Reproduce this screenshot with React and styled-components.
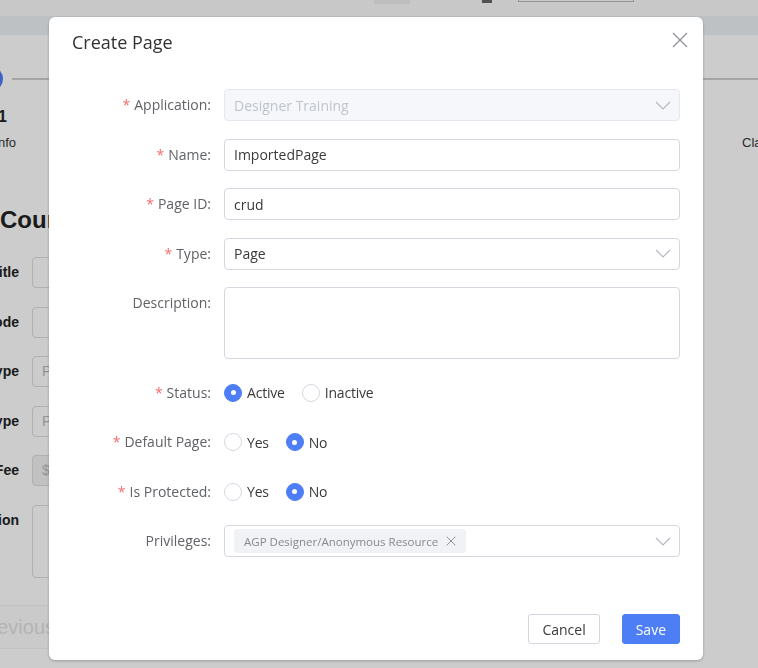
import styled, { createGlobalStyle } from "styled-components";

const GlobalStyle = createGlobalStyle`
  html, body {
    margin: 0;
    padding: 0;
    background: #fff;
    font-family: "Open Sans", "Noto Sans", sans-serif;
  }
`

// ---- page behind the dialog ----

const Page = styled.div`
  width: 758px;
  height: 668px;
  overflow: hidden;
  background: #fff;
  font-family: "Liberation Sans", Arial, sans-serif;
  color: #222;
`

const TopBar = styled.div`
  height: 16px;
  background: #fbfbfb;
  display: flex;
  align-items: flex-start;
  padding-left: 374px;
`

const TopTab = styled.div`
  width: 36px;
  height: 4px;
  background: #eeeeee;
`

const TopCheck = styled.div`
  width: 10px;
  height: 3px;
  margin-left: 72px;
  background: #666;
`

const TopInput = styled.div`
  width: 114px;
  height: 1px;
  margin-left: 26px;
  border: 1px solid #bbb;
  border-top: none;
`

const SubBar = styled.div`
  height: 19px;
  background: #eef2f6;
`

const BgBody = styled.div`
  margin-left: -41px;
  padding-top: 31px;
`

const StepHead = styled.div`
  display: flex;
  align-items: center;
  height: 26px;
`

const StepDot = styled.div`
  width: 26px;
  height: 26px;
  margin-left: 18px;
  border-radius: 50%;
  background: #4d7ef5;
`

const StepLine = styled.div`
  flex: 1;
  height: 2px;
  margin-left: 9px;
  background: #cfcfcf;
`

const StepTexts = styled.div`
  display: flex;
  align-items: flex-start;
  margin-top: 15px;
`

const StepText = styled.div`
  flex-shrink: 0;
  width: ${p => p.$w}px;
  margin-left: ${p => p.$offset || 0}px;
  white-space: nowrap;
`

const StepNum = styled.div`
  font-weight: 700;
  font-size: 16px;
  line-height: 20px;
`

const StepName = styled.div`
  font-size: 13px;
  line-height: 20px;
  margin-top: 6px;
  color: #333;
`

const BgHeading = styled.h1`
  margin: 51px 0 0 41px;
  font-size: 24px;
  line-height: 32px;
  font-weight: 700;
  white-space: nowrap;
`

const BgForm = styled.div`
  margin-top: 21px;
  display: flex;
  flex-direction: column;
  gap: 18.5px;
`

const BgRow = styled.div`
  display: flex;
  align-items: flex-start;
  gap: 13px;
`

const BgLabel = styled.div`
  width: 60px;
  text-align: right;
  white-space: nowrap;
  font-weight: 700;
  font-size: 14px;
  line-height: 31px;
  direction: rtl;
`

const BgInput = styled.div`
  width: 220px;
  height: ${p => p.$h || 31}px;
  box-sizing: border-box;
  border: 1px solid #dcdcdc;
  border-radius: 4px;
  background: ${p => (p.$muted ? "#f2f2f2" : "#fff")};
  padding-left: 9px;
  font-size: 14px;
  line-height: 29px;
  color: #b8b8b8;
`

const BgButton = styled.div`
  margin-top: 27px;
  margin-left: -10px;
  width: 160px;
  height: 44px;
  box-sizing: border-box;
  border-top: 1px solid #f4f4f4;
  border-bottom: 1px solid #f4f4f4;
  background: #fdfdfd;
  font-size: 20px;
  line-height: 42px;
  color: #e2e2e2;
  text-align: right;
  padding-right: 54px;
`

// ---- dialog ----

const Overlay = styled.div`
  position: fixed;
  inset: 0;
  background: rgba(0, 0, 0, 0.2);
`

const Modal = styled.div`
  margin: 17px 0 0 49px;
  width: 654px;
  height: 643px;
  box-sizing: border-box;
  background: #fff;
  border-radius: 6px;
  box-shadow: 0 1px 3px rgba(0, 0, 0, 0.25);
  display: flex;
  flex-direction: column;
  padding-bottom: 16px;
  font-family: "Open Sans", "Noto Sans", sans-serif;
`

const Header = styled.div`
  display: flex;
  justify-content: space-between;
  align-items: center;
  padding: 13px 15px 0 23px;
`

const Title = styled.div`
  font-size: 18px;
  line-height: 24px;
  color: #303133;
`

const CloseBtn = styled.button`
  border: none;
  background: none;
  padding: 0;
  margin-top: -4px;
  display: flex;
  cursor: pointer;
`

const Body = styled.div`
  padding: 35px 23px 0 23px;
  display: flex;
  flex-direction: column;
  gap: 17.5px;
`

const Row = styled.div`
  display: flex;
  align-items: flex-start;
  gap: 13px;
`

const Label = styled.div`
  width: 139px;
  flex-shrink: 0;
  text-align: right;
  font-size: 14px;
  line-height: 32px;
  color: #606266;
  white-space: nowrap;
`

const Star = styled.span`
  color: #f56c6c;
  margin-right: 4px;
`

const Field = styled.div`
  flex: 1;
  height: ${p => p.$h || 32}px;
  box-sizing: border-box;
  border: 1px solid ${p => (p.$disabled ? "#e4e7ed" : "#d4d7de")};
  border-radius: 4px;
  background: ${p => (p.$disabled ? "#f5f7fa" : "#fff")};
  display: flex;
  align-items: ${p => (p.$top ? "flex-start" : "center")};
  padding: 0 8px 0 9px;
  font-size: 14px;
  color: ${p => (p.$disabled ? "#c0c4cc" : "#3a3a3a")};
`

const FieldText = styled.span`
  flex: 1;
  display: flex;
  white-space: nowrap;
`

const RadioGroup = styled.div`
  display: flex;
  align-items: center;
  height: 32px;
  gap: 17px;
`

const RadioItem = styled.label`
  display: flex;
  align-items: center;
  gap: 5px;
  font-size: 14px;
  letter-spacing: -0.2px;
  color: #3a3a3a;
  cursor: pointer;
`

const RadioDot = styled.span`
  width: 18px;
  height: 18px;
  box-sizing: border-box;
  border-radius: 50%;
  border: 1px solid ${p => (p.$on ? "#4d7ef5" : "#d4d7de")};
  background: ${p => (p.$on ? "#4d7ef5" : "#fff")};
  display: flex;
  align-items: center;
  justify-content: center;

  &::after {
    content: "";
    width: 5px;
    height: 5px;
    border-radius: 50%;
    background: ${p => (p.$on ? "#fff" : "transparent")};
  }
`

const Tag = styled.span`
  display: inline-flex;
  align-items: center;
  gap: 8px;
  height: 24px;
  padding: 0 10px;
  border-radius: 3px;
  background: #f0f2f5;
  font-size: 11.5px;
  color: #86898f;
  white-space: nowrap;
`

const Footer = styled.div`
  margin-top: auto;
  display: flex;
  justify-content: flex-end;
  gap: 22px;
  padding-right: 23px;
`

const Button = styled.button`
  height: 30px;
  padding: 0 13px;
  border-radius: 3px;
  font-family: "Open Sans", "Noto Sans", sans-serif;
  font-size: 14px;
  border: 1px solid ${p => (p.$primary ? "#4d7ef5" : "#d4d7de")};
  background: ${p => (p.$primary ? "#4d7ef5" : "#fff")};
  color: ${p => (p.$primary ? "#fff" : "#3a3a3a")};
  cursor: pointer;
`

const Chevron = () => (
  <svg width="16" height="9" viewBox="0 0 16 9" style={{ flexShrink: 0 }}>
    <path d="M1 1 L8 8 L15 1" fill="none" stroke="#b4b8bf" strokeWidth="1.2" />
  </svg>
)

const Cross = ({ size = 16, color = "#909399", width = 1.3 }) => (
  <svg width={size} height={size} viewBox="0 0 16 16">
    <path d="M1 1 L15 15 M15 1 L1 15" fill="none" stroke={color} strokeWidth={width} />
  </svg>
)

function Radio({ on, children }) {
  return (
    <RadioItem>
      <RadioDot $on={on} />
      {children}
    </RadioItem>
  )
}

function FormRow({ label, required, children }) {
  return (
    <Row>
      <Label>
        {required && <Star>*</Star>}
        {label}:
      </Label>
      {children}
    </Row>
  )
}

export default function App() {
  return (
    <>
      <GlobalStyle />
      <Page>
        <TopBar>
          <TopTab />
          <TopCheck />
          <TopInput />
        </TopBar>
        <SubBar />
        <BgBody>
          <StepHead>
            <StepDot />
            <StepLine />
          </StepHead>
          <StepTexts>
            <StepText $w={80}>
              <StepNum>Step 1</StepNum>
              <StepName>Basic Info</StepName>
            </StepText>
            <StepText $w={120} $offset={703}>
              <StepNum>&nbsp;</StepNum>
              <StepName>Class Schedule</StepName>
            </StepText>
          </StepTexts>
          <BgHeading>Course Details</BgHeading>
          <BgForm>
            <BgRow><BgLabel>Course Title</BgLabel><BgInput /></BgRow>
            <BgRow><BgLabel>Course Code</BgLabel><BgInput /></BgRow>
            <BgRow><BgLabel>Course Type</BgLabel><BgInput>Please select</BgInput></BgRow>
            <BgRow><BgLabel>Delivery Type</BgLabel><BgInput>Please select</BgInput></BgRow>
            <BgRow><BgLabel>Course Fee</BgLabel><BgInput $muted>$</BgInput></BgRow>
            <BgRow><BgLabel>Description</BgLabel><BgInput $h={73} /></BgRow>
          </BgForm>
          <BgButton>Previous</BgButton>
        </BgBody>
      </Page>

      <Overlay>
        <Modal>
          <Header>
            <Title>Create Page</Title>
            <CloseBtn aria-label="Close">
              <Cross />
            </CloseBtn>
          </Header>

          <Body>
            <FormRow label="Application" required>
              <Field $disabled>
                <FieldText>Designer Training</FieldText>
                <Chevron />
              </Field>
            </FormRow>
            <FormRow label="Name" required>
              <Field><FieldText>ImportedPage</FieldText></Field>
            </FormRow>
            <FormRow label="Page ID" required>
              <Field><FieldText>crud</FieldText></Field>
            </FormRow>
            <FormRow label="Type" required>
              <Field>
                <FieldText>Page</FieldText>
                <Chevron />
              </Field>
            </FormRow>
            <FormRow label="Description">
              <Field $h={72} $top />
            </FormRow>
            <FormRow label="Status" required>
              <RadioGroup>
                <Radio on>Active</Radio>
                <Radio>Inactive</Radio>
              </RadioGroup>
            </FormRow>
            <FormRow label="Default Page" required>
              <RadioGroup>
                <Radio>Yes</Radio>
                <Radio on>No</Radio>
              </RadioGroup>
            </FormRow>
            <FormRow label="Is Protected" required>
              <RadioGroup>
                <Radio>Yes</Radio>
                <Radio on>No</Radio>
              </RadioGroup>
            </FormRow>
            <FormRow label="Privileges">
              <Field>
                <FieldText>
                  <Tag>
                    AGP Designer/Anonymous Resource
                    <Cross size={10} color="#909399" width={1.6} />
                  </Tag>
                </FieldText>
                <Chevron />
              </Field>
            </FormRow>
          </Body>

          <Footer>
            <Button>Cancel</Button>
            <Button $primary>Save</Button>
          </Footer>
        </Modal>
      </Overlay>
    </>
  )
}
